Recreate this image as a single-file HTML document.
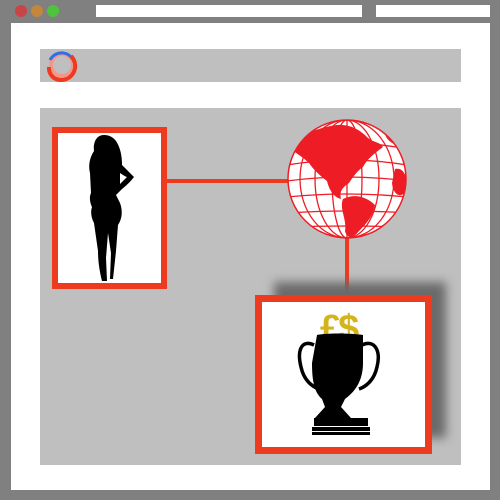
<!DOCTYPE html><html><head><style>
body{margin:0;width:500px;height:500px;background:#808080;position:relative;overflow:hidden;font-family:"Liberation Sans",sans-serif}
div{position:absolute;box-sizing:border-box}
.dot{width:12px;height:12px;border-radius:50%;top:5px}
</style></head><body>
<div class="dot" style="left:15px;background:#c94545"></div>
<div class="dot" style="left:31px;background:#c4853d"></div>
<div class="dot" style="left:47px;background:#4fc23e"></div>
<div style="left:96px;top:5px;width:266px;height:12px;background:#fff"></div>
<div style="left:376px;top:5px;width:114px;height:12px;background:#fff"></div>
<div style="left:11px;top:23px;width:479px;height:467px;background:#fff"></div>
<div style="left:40px;top:49px;width:421px;height:33px;background:#bfbfbf"></div>
<svg style="position:absolute;left:44px;top:47px" width="36" height="36" viewBox="0 0 36 36">
<circle cx="18" cy="18" r="11" fill="none" stroke="#f3978a" stroke-width="4"/>
<path d="M6 13 A13 13 0 0 1 30 15" fill="none" stroke="#2f6fe6" stroke-width="3"/>
<path d="M27 9 A14 14 0 0 1 10 31 A13 13 0 0 1 5 20" fill="none" stroke="#ee3a1f" stroke-width="4"/>
</svg>
<div style="left:40px;top:108px;width:421px;height:357px;background:#bfbfbf"></div>
<div style="left:167px;top:179px;width:122px;height:4px;background:#ee3a1f"></div>
<div style="left:345px;top:236px;width:4px;height:60px;background:#ee3a1f"></div>
<div style="left:274px;top:282px;width:172px;height:156px;background:#6a6a6a;filter:blur(5px)"></div>
<div style="left:52px;top:127px;width:115px;height:162px;background:#fff;border:6px solid #ee3a1f"></div>
<svg style="position:absolute;left:80px;top:133px" width="60" height="150" viewBox="0 0 60 150">
<path d="M24 2 C16 2 13 10 14 18 C10 24 8 32 10 40 L11 60 C9 64 10 70 12 74 C10 80 12 86 14 90 L18 118 C18 130 20 140 22 148 L27 148 L26 125 L28 100 L31 120 L30 146 L33 146 L36 118 L38 92 C42 86 43 78 40 70 L36 62 C38 60 40 58 42 56 C47 52 51 48 54 44 C50 40 46 36 42 32 C42 22 40 14 36 8 C33 4 29 2 24 2 Z M40 40 C43 42 46 44 47 44 L40 51 Z" fill="#000"/>
</svg>
<svg style="position:absolute;left:287px;top:119px" width="120" height="120" viewBox="0 0 120 120">
<defs><clipPath id="c"><circle cx="60" cy="60" r="59"/></clipPath></defs>
<circle cx="60" cy="60" r="59" fill="#fff" stroke="#ee1c24" stroke-width="1.5"/>
<g clip-path="url(#c)" fill="none" stroke="#ee1c24" stroke-width="1.3">
<ellipse cx="60" cy="60" rx="15" ry="59"/><ellipse cx="60" cy="60" rx="32" ry="59"/><ellipse cx="60" cy="60" rx="47" ry="59"/><line x1="60" y1="0" x2="60" y2="120"/>
<path d="M0 30 Q60 18 120 30 M0 46 Q60 36 120 46 M0 62 Q60 54 120 62 M0 78 Q60 72 120 78 M0 94 Q60 90 120 94 M0 108 Q60 106 120 108"/>
</g>
<g clip-path="url(#c)" fill="#ee1c24">
<path d="M2 28 C14 14 35 8 50 6 C62 5 72 10 80 18 C86 24 92 22 96 28 C88 34 80 40 76 48 C70 52 66 58 62 64 C56 68 52 72 54 80 C46 78 42 70 40 62 C32 56 26 50 22 44 C16 38 8 34 2 28 Z"/>
<path d="M56 80 C68 74 80 78 88 86 C86 98 78 106 72 112 C66 120 60 120 58 112 C60 100 52 90 56 80 Z"/>
<path d="M108 50 C118 48 121 60 119 72 C114 80 106 76 105 64 Z"/>
<path d="M98 10 C108 12 112 20 110 26 C102 24 96 16 98 10 Z"/>
</g>
</svg>
<div style="left:255px;top:295px;width:177px;height:159px;background:#fff;border:7px solid #ee3a1f"></div>
<svg style="position:absolute;left:295px;top:305px" width="92" height="135" viewBox="0 0 92 135">
<text x="25" y="36" font-size="38" font-weight="bold" fill="#d4b41a" font-family="Liberation Sans" letter-spacing="-3">£$</text>
<path d="M22 30 C30 28 56 28 68 30 L68 58 C68 78 58 88 50 94 L46 102 L56 113 L20 113 L30 102 L27 94 C20 88 17 78 17 58 Z" fill="#000"/>
<path d="M19 40 C6 34 2 46 6 62 C9 76 18 82 24 84" fill="none" stroke="#000" stroke-width="3.5"/>
<path d="M67 40 C80 34 86 46 82 62 C79 76 70 82 64 84" fill="none" stroke="#000" stroke-width="3.5"/>
<rect x="19" y="113" width="54" height="8" fill="#000"/>
<rect x="17" y="122" width="58" height="4" fill="#000"/><rect x="17" y="127" width="58" height="3" fill="#000"/>
</svg>
</body></html>
